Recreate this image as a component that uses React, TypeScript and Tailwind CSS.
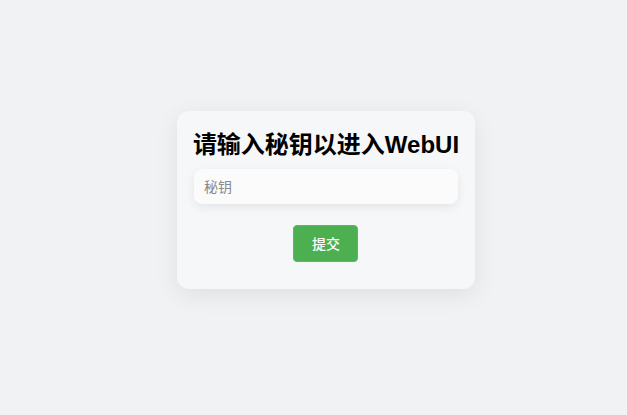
export default function App() {
  return (
    <div
      className="flex h-[415px] w-full items-center justify-center bg-[#f1f2f4] pl-[25px] pb-[15px]"
      style={{ fontFamily: '"Liberation Sans", "Noto Sans CJK SC", sans-serif' }}
    >
      {/* Login card */}
      <div className="flex flex-col items-center rounded-xl bg-[#f6f7f9] px-4 pt-4 pb-[27px] shadow-[0_6px_24px_rgba(0,0,0,0.08)]">
        <h2 className="whitespace-nowrap text-[24px] leading-[36px] font-bold text-black">
          请输入秘钥以进入WebUI
        </h2>
        <input
          type="password"
          placeholder="秘钥"
          className="mt-[6px] h-[35px] w-[264px] rounded-lg bg-[#fbfbfc] px-[10px] text-sm text-gray-800 shadow-[0_3px_10px_rgba(0,0,0,0.08)] outline-none placeholder:text-[#8a8a8a]"
        />
        <button className="mt-[21px] h-[37px] w-[65px] rounded-[4px] border border-[#5cb860] bg-[#4caf50] text-sm font-medium text-white">
          提交
        </button>
      </div>
    </div>
  );
}
